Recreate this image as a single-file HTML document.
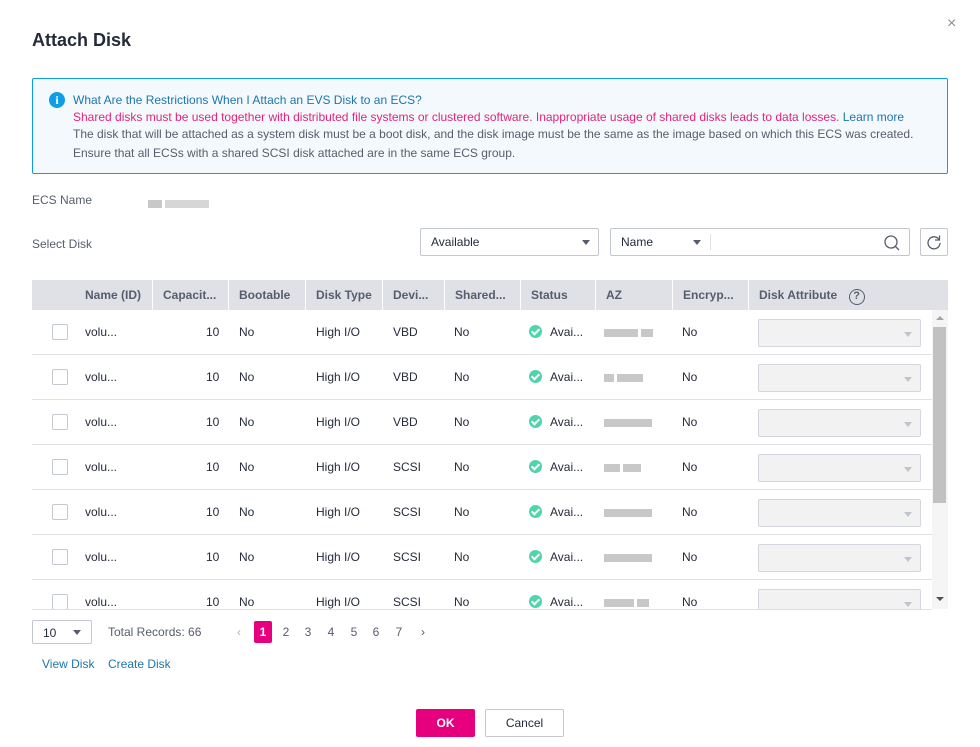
<!DOCTYPE html>
<html><head><style>
*{box-sizing:border-box;margin:0;padding:0}
body{width:980px;height:747px;background:#fff;font-family:"Liberation Sans",sans-serif;font-size:12px;color:#252b3a;position:relative;overflow:hidden}
.a{position:absolute;white-space:nowrap}
.hdr{position:absolute;left:32px;top:280px;width:916px;height:30px;background:#dfe1e6}
.hc{position:absolute;top:0;height:30px;line-height:30px;padding-left:10px;font-weight:bold;color:#575d6c;border-left:1px solid #fff}
.row{position:absolute;left:32px;width:900px;height:45px;border-bottom:1px solid #dfe1e6}
.cb{position:absolute;left:20px;top:14px;width:16px;height:16px;border:1px solid #c3c7cf;border-radius:2px;background:#fff}
.c{position:absolute;top:0;line-height:44px;color:#252b3a}
.sel{position:absolute;left:726px;top:9px;width:163px;height:28px;border:1px solid #d3d6dc;background:#f2f2f2;border-radius:2px}
.sel:after{content:"";position:absolute;right:8px;top:12px;border:4px solid transparent;border-top:5px solid #c0c4cc}
.ok{display:inline-block;width:13px;height:13px;border-radius:50%;background:#50d4ab;vertical-align:middle;margin-right:8px;position:relative;top:-1px}
.ok:after{content:"";position:absolute;left:4px;top:2px;width:3px;height:6px;border:solid #fff;border-width:0 2px 2px 0;transform:rotate(45deg)}
.blur{display:inline-block;height:8px;background:#c8c8c8;vertical-align:middle}
.pg{position:absolute;top:621px;width:18px;height:22px;line-height:22px;text-align:center;color:#575d6c;font-size:12px}
</style></head><body>
<div class="a" style="left:32px;top:30px;font-size:18px;font-weight:bold;color:#252b3a">Attach Disk</div>
<div class="a" style="left:947px;top:15px;font-size:16px;color:#8a8e99">×</div>
<div class="a" style="left:32px;top:78px;width:916px;height:96px;border:1px solid #0ea0d8;background:#f4f9fd;border-radius:2px"></div>
<div class="a" style="left:49px;top:92px;width:16px;height:16px;border-radius:50%;background:#0f9de8;color:#fff;font-weight:bold;font-size:12px;text-align:center;line-height:16px;font-family:'Liberation Serif',serif">i</div>
<div class="a" style="left:73px;top:91px;line-height:18px;color:#1d76ac">What Are the Restrictions When I Attach an EVS Disk to an ECS?</div>
<div class="a" style="left:73px;top:108px;line-height:18px;color:#e4247a">Shared disks must be used together with distributed file systems or clustered software. Inappropriate usage of shared disks leads to data losses. <span style="color:#1d76ac">Learn more</span></div>
<div class="a" style="left:73px;top:125px;line-height:18px;color:#575d6c">The disk that will be attached as a system disk must be a boot disk, and the disk image must be the same as the image based on which this ECS was created.</div>
<div class="a" style="left:73px;top:144px;line-height:18px;color:#575d6c">Ensure that all ECSs with a shared SCSI disk attached are in the same ECS group.</div>
<div class="a" style="left:32px;top:193px;color:#575d6c">ECS Name</div>
<div class="a" style="left:148px;top:196px"><span class="blur" style="width:14px"></span> <span class="blur" style="width:44px;background:#d6d6d6"></span></div>
<div class="a" style="left:32px;top:237px;color:#575d6c">Select Disk</div>
<div class="a" style="left:420px;top:228px;width:179px;height:28px;border:1px solid #c3c7cf;border-radius:2px"><span class="a" style="left:10px;top:6px">Available</span><span class="a" style="right:8px;top:11px;border:4px solid transparent;border-top:5px solid #575d6c"></span></div>
<div class="a" style="left:610px;top:228px;width:300px;height:28px;border:1px solid #c3c7cf;border-radius:2px"><span class="a" style="left:10px;top:6px">Name</span><span class="a" style="left:82px;top:11px;border:4px solid transparent;border-top:5px solid #575d6c"></span><span class="a" style="left:99px;top:5px;width:1px;height:16px;background:#dfe1e6"></span>
<svg class="a" style="left:272px;top:5px" width="18" height="18" viewBox="0 0 18 18"><circle cx="8" cy="8" r="6" fill="none" stroke="#575d6c" stroke-width="1.3"/><path d="M12.5 12.5L16 16" stroke="#575d6c" stroke-width="1.3"/></svg></div>
<div class="a" style="left:920px;top:228px;width:28px;height:28px;border:1px solid #c3c7cf;border-radius:2px"><svg class="a" style="left:5px;top:5px" width="16" height="16" viewBox="0 0 16 16"><path d="M13 5.5A6 6 0 1 0 14 9" fill="none" stroke="#575d6c" stroke-width="1.3"/><path d="M13.5 1.5v4.5h-4.5" fill="none" stroke="#575d6c" stroke-width="1.3"/></svg></div>

<div class="hdr">
<div class="hc" style="left:43px;border:0">Name (ID)</div>
<div class="hc" style="left:120px">Capacit...</div>
<div class="hc" style="left:196px">Bootable</div>
<div class="hc" style="left:273px">Disk Type</div>
<div class="hc" style="left:350px">Devi...</div>
<div class="hc" style="left:412px">Shared...</div>
<div class="hc" style="left:488px">Status</div>
<div class="hc" style="left:563px">AZ</div>
<div class="hc" style="left:640px">Encryp...</div>
<div class="hc" style="left:716px">Disk Attribute <span style="display:inline-block;width:16px;height:16px;border:1.3px solid #575d6c;border-radius:50%;line-height:13px;text-align:center;font-size:11px;margin-left:8px">?</span></div>
</div>

<div style="position:absolute;left:0;top:310px;width:980px;height:300px;overflow:hidden">
<div class="row" style="top:0"><div class="cb"></div><div class="c" style="left:53px">volu...</div><div class="c" style="left:174px">10</div><div class="c" style="left:207px">No</div><div class="c" style="left:284px">High I/O</div><div class="c" style="left:361px">VBD</div><div class="c" style="left:422px">No</div><div class="c" style="left:497px"><span class="ok"></span>Avai...</div><div class="c" style="left:572px"><span class="blur" style="width:34px"></span> <span class="blur" style="width:12px"></span></div><div class="c" style="left:650px">No</div><div class="sel"></div></div>
<div class="row" style="top:45px"><div class="cb"></div><div class="c" style="left:53px">volu...</div><div class="c" style="left:174px">10</div><div class="c" style="left:207px">No</div><div class="c" style="left:284px">High I/O</div><div class="c" style="left:361px">VBD</div><div class="c" style="left:422px">No</div><div class="c" style="left:497px"><span class="ok"></span>Avai...</div><div class="c" style="left:572px"><span class="blur" style="width:10px"></span> <span class="blur" style="width:26px"></span></div><div class="c" style="left:650px">No</div><div class="sel"></div></div>
<div class="row" style="top:90px"><div class="cb"></div><div class="c" style="left:53px">volu...</div><div class="c" style="left:174px">10</div><div class="c" style="left:207px">No</div><div class="c" style="left:284px">High I/O</div><div class="c" style="left:361px">VBD</div><div class="c" style="left:422px">No</div><div class="c" style="left:497px"><span class="ok"></span>Avai...</div><div class="c" style="left:572px"><span class="blur" style="width:48px"></span></div><div class="c" style="left:650px">No</div><div class="sel"></div></div>
<div class="row" style="top:135px"><div class="cb"></div><div class="c" style="left:53px">volu...</div><div class="c" style="left:174px">10</div><div class="c" style="left:207px">No</div><div class="c" style="left:284px">High I/O</div><div class="c" style="left:361px">SCSI</div><div class="c" style="left:422px">No</div><div class="c" style="left:497px"><span class="ok"></span>Avai...</div><div class="c" style="left:572px"><span class="blur" style="width:16px"></span> <span class="blur" style="width:18px"></span></div><div class="c" style="left:650px">No</div><div class="sel"></div></div>
<div class="row" style="top:180px"><div class="cb"></div><div class="c" style="left:53px">volu...</div><div class="c" style="left:174px">10</div><div class="c" style="left:207px">No</div><div class="c" style="left:284px">High I/O</div><div class="c" style="left:361px">SCSI</div><div class="c" style="left:422px">No</div><div class="c" style="left:497px"><span class="ok"></span>Avai...</div><div class="c" style="left:572px"><span class="blur" style="width:48px"></span></div><div class="c" style="left:650px">No</div><div class="sel"></div></div>
<div class="row" style="top:225px"><div class="cb"></div><div class="c" style="left:53px">volu...</div><div class="c" style="left:174px">10</div><div class="c" style="left:207px">No</div><div class="c" style="left:284px">High I/O</div><div class="c" style="left:361px">SCSI</div><div class="c" style="left:422px">No</div><div class="c" style="left:497px"><span class="ok"></span>Avai...</div><div class="c" style="left:572px"><span class="blur" style="width:48px"></span></div><div class="c" style="left:650px">No</div><div class="sel"></div></div>
<div class="row" style="top:270px"><div class="cb"></div><div class="c" style="left:53px">volu...</div><div class="c" style="left:174px">10</div><div class="c" style="left:207px">No</div><div class="c" style="left:284px">High I/O</div><div class="c" style="left:361px">SCSI</div><div class="c" style="left:422px">No</div><div class="c" style="left:497px"><span class="ok"></span>Avai...</div><div class="c" style="left:572px"><span class="blur" style="width:30px"></span> <span class="blur" style="width:12px"></span></div><div class="c" style="left:650px">No</div><div class="sel"></div></div>
</div>
<div class="a" style="left:32px;top:609px;width:900px;height:1px;background:#dfe1e6"></div>
<div class="a" style="left:932px;top:310px;width:16px;height:299px;background:#f5f5f5"></div>
<div class="a" style="left:933px;top:327px;width:13px;height:176px;background:#c1c1c1"></div>
<div class="a" style="left:936px;top:316px;border:4px solid transparent;border-bottom:4px solid #a3a3a3;border-top:0"></div>
<div class="a" style="left:936px;top:597px;border:4px solid transparent;border-top:4px solid #505050;border-bottom:0"></div>

<div class="a" style="left:32px;top:620px;width:60px;height:24px;border:1px solid #c3c7cf;border-radius:2px"><span class="a" style="left:10px;top:5px">10</span><span class="a" style="right:10px;top:9px;border:4px solid transparent;border-top:5px solid #575d6c"></span></div>
<div class="a" style="left:108px;top:625px;color:#575d6c">Total Records: 66</div>
<div class="pg" style="left:230px;color:#adb0b8">‹</div>
<div class="pg" style="left:254px;background:#e6007e;color:#fff;font-weight:bold;border-radius:2px">1</div>
<div class="pg" style="left:277px">2</div>
<div class="pg" style="left:299px">3</div>
<div class="pg" style="left:322px">4</div>
<div class="pg" style="left:345px">5</div>
<div class="pg" style="left:367px">6</div>
<div class="pg" style="left:390px">7</div>
<div class="pg" style="left:414px">›</div>
<div class="a" style="left:42px;top:657px;color:#1d76ac">View Disk</div>
<div class="a" style="left:108px;top:657px;color:#1d76ac">Create Disk</div>
<div class="a" style="left:416px;top:709px;width:59px;height:28px;background:#e6007e;color:#fff;font-weight:bold;text-align:center;line-height:28px;border-radius:2px">OK</div>
<div class="a" style="left:485px;top:709px;width:79px;height:28px;border:1px solid #c3c7cf;color:#252b3a;text-align:center;line-height:26px;border-radius:2px">Cancel</div>
</body></html>
